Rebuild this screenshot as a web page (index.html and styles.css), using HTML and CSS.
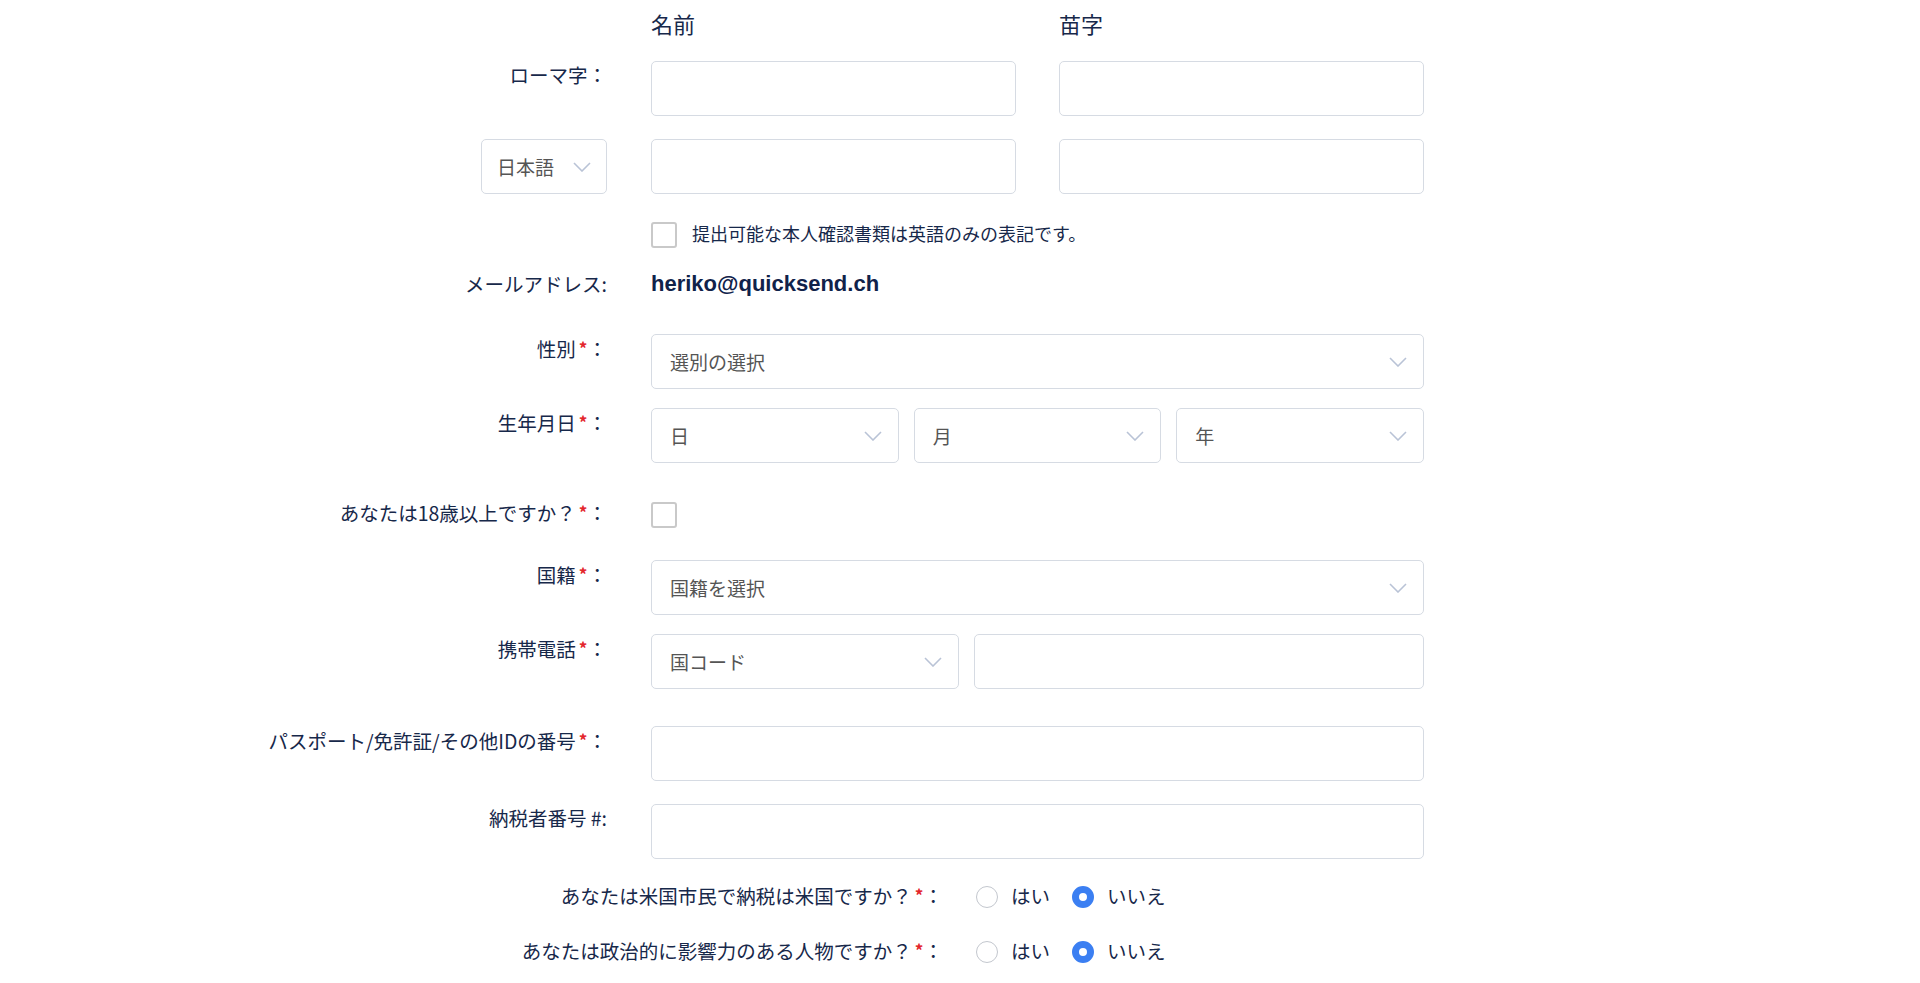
FILE: index.html
```html
<!DOCTYPE html>
<html lang="ja">
<head>
<meta charset="utf-8">
<title>Form</title>
<link rel="stylesheet" href="styles.css">
</head>
<body>
<form class="form">
  <div class="row row-head">
    <div class="label"></div>
    <div class="pair">
      <div class="col-title">名前</div>
      <div class="col-title">苗字</div>
    </div>
  </div>

  <div class="row row-r1">
    <div class="label">ローマ字：</div>
    <div class="pair">
      <input class="input" type="text">
      <input class="input" type="text">
    </div>
  </div>

  <div class="row row-r2">
    <div class="label label-ctrl">
      <div class="select select-lang"><span>日本語</span><svg class="chev" viewBox="0 0 18 10" width="18" height="10"><polyline points="1,1 9,9 17,1"/></svg></div>
    </div>
    <div class="pair">
      <input class="input" type="text">
      <input class="input" type="text">
    </div>
  </div>

  <div class="row row-check">
    <div class="label"></div>
    <div class="check-line">
      <span class="checkbox"></span>
      <span class="check-text">提出可能な本人確認書類は英語のみの表記です。</span>
    </div>
  </div>

  <div class="row row-email">
    <div class="label label-email">メールアドレス:</div>
    <div class="email">heriko@quicksend.ch</div>
  </div>

  <div class="row row-gender">
    <div class="label">性別<span class="req">*</span>：</div>
    <div class="select"><span>選別の選択</span><svg class="chev" viewBox="0 0 18 10" width="18" height="10"><polyline points="1,1 9,9 17,1"/></svg></div>
  </div>

  <div class="row row-dob">
    <div class="label">生年月日<span class="req">*</span>：</div>
    <div class="triple">
      <div class="select"><span>日</span><svg class="chev" viewBox="0 0 18 10" width="18" height="10"><polyline points="1,1 9,9 17,1"/></svg></div>
      <div class="select"><span>月</span><svg class="chev" viewBox="0 0 18 10" width="18" height="10"><polyline points="1,1 9,9 17,1"/></svg></div>
      <div class="select"><span>年</span><svg class="chev" viewBox="0 0 18 10" width="18" height="10"><polyline points="1,1 9,9 17,1"/></svg></div>
    </div>
  </div>

  <div class="row row-adult">
    <div class="label">あなたは18歳以上ですか？<span class="req">*</span>：</div>
    <div class="adult-box"><span class="checkbox"></span></div>
  </div>

  <div class="row row-nation">
    <div class="label">国籍<span class="req">*</span>：</div>
    <div class="select"><span>国籍を選択</span><svg class="chev" viewBox="0 0 18 10" width="18" height="10"><polyline points="1,1 9,9 17,1"/></svg></div>
  </div>

  <div class="row row-phone">
    <div class="label">携帯電話<span class="req">*</span>：</div>
    <div class="phone">
      <div class="select"><span>国コード</span><svg class="chev" viewBox="0 0 18 10" width="18" height="10"><polyline points="1,1 9,9 17,1"/></svg></div>
      <input class="input" type="text">
    </div>
  </div>

  <div class="row row-passport">
    <div class="label">パスポート/免許証/その他IDの番号<span class="req">*</span>：</div>
    <input class="input" type="text">
  </div>

  <div class="row row-tax">
    <div class="label">納税者番号 #:</div>
    <input class="input" type="text">
  </div>

  <div class="radio-row radio-row-1">
    <div class="label">あなたは米国市民で納税は米国ですか？<span class="req">*</span>：</div>
    <div class="radios">
      <span class="radio"></span><span class="radio-text">はい</span>
      <span class="radio radio-on"></span><span class="radio-text">いいえ</span>
    </div>
  </div>

  <div class="radio-row radio-row-2">
    <div class="label">あなたは政治的に影響力のある人物ですか？<span class="req">*</span>：</div>
    <div class="radios">
      <span class="radio"></span><span class="radio-text">はい</span>
      <span class="radio radio-on"></span><span class="radio-text">いいえ</span>
    </div>
  </div>
</form>
</body>
</html>
```

FILE: styles.css
```css
* {
  box-sizing: border-box;
}

body {
  margin: 0;
  background: #ffffff;
  font-family: "Noto Sans CJK JP", "Noto Sans", sans-serif;
  color: #17284a;
}

.form {
  width: 1224px;
  margin-left: 200px;
  padding-top: 8px;
}

.row {
  display: grid;
  grid-template-columns: 407px 773px;
  column-gap: 44px;
  align-items: start;
}

.label {
  text-align: right;
  font-size: 19.5px;
  line-height: 27px;
  color: #17284a;
  white-space: nowrap;
}

.req {
  color: #e3262b;
  font-size: 17px;
  font-weight: 700;
  margin-left: 3px;
  vertical-align: 2px;
}

.col-title {
  font-size: 22px;
  line-height: 30px;
  color: #17284a;
}

.pair {
  display: grid;
  grid-template-columns: 1fr 1fr;
  column-gap: 43px;
}

.triple {
  display: grid;
  grid-template-columns: 1fr 1fr 1fr;
  column-gap: 15px;
}

.phone {
  display: grid;
  grid-template-columns: 308px 1fr;
  column-gap: 15px;
}

.input {
  display: block;
  width: 100%;
  height: 55px;
  border: 1px solid #d6dbe3;
  border-radius: 5px;
  background: #fff;
  margin: 0;
  padding: 0 18px;
  font: inherit;
  outline: none;
}

.select {
  height: 55px;
  border: 1px solid #d6dbe3;
  border-radius: 5px;
  background: #fff;
  display: flex;
  align-items: center;
  justify-content: space-between;
  padding: 0 16px 0 18px;
  font-size: 19px;
  color: #555555;
}

.chev {
  fill: none;
  stroke: #b9c3d6;
  stroke-width: 1.6;
  flex: none;
}

.label-ctrl {
  display: flex;
  justify-content: flex-end;
}

.select-lang {
  width: 126px;
  padding: 0 15px 0 15px;
}

.check-line {
  display: flex;
  align-items: center;
  gap: 15px;
}

.checkbox {
  display: block;
  width: 26px;
  height: 26px;
  border: 2px solid #c9c9c9;
  border-radius: 3px;
  background: #fff;
  flex: none;
}

.check-text {
  font-size: 18px;
  line-height: 26px;
  margin-top: -5px;
  color: #17284a;
}

.label-email {
  line-height: 30px;
}

.email {
  font-family: "Liberation Sans", Arial, sans-serif;
  font-weight: 700;
  font-size: 22px;
  line-height: 30px;
  color: #10224a;
}

.adult-box {
  padding-top: 4px;
}

.row-head { margin-top: 0; }
.row-r1 { margin-top: 23px; }
.row-r2 { margin-top: 23px; }
.row-check { margin-top: 28px; }
.row-email { margin-top: 21px; }
.row-gender { margin-top: 35px; }
.row-dob { margin-top: 19px; }
.row-adult { margin-top: 35px; }
.row-nation { margin-top: 32px; }
.row-phone { margin-top: 19px; }
.row-passport { margin-top: 37px; }
.row-tax { margin-top: 23px; }

.radio-row {
  display: grid;
  grid-template-columns: 743px auto;
  column-gap: 33px;
  align-items: center;
  height: 30px;
}

.radio-row-1 { margin-top: 21px; }
.radio-row-2 { margin-top: 25px; }

.radios {
  display: flex;
  align-items: center;
}

.radio {
  display: block;
  width: 22px;
  height: 22px;
  border-radius: 50%;
  border: 1.5px solid #c3c7ce;
  background: #fff;
  flex: none;
  margin-top: 3px;
}

.radio-on {
  border: 7px solid #3b7ff2;
}

.radio-text {
  font-size: 19.5px;
  line-height: 27px;
  margin-left: 13px;
  margin-right: 22px;
  color: #17284a;
}
```
